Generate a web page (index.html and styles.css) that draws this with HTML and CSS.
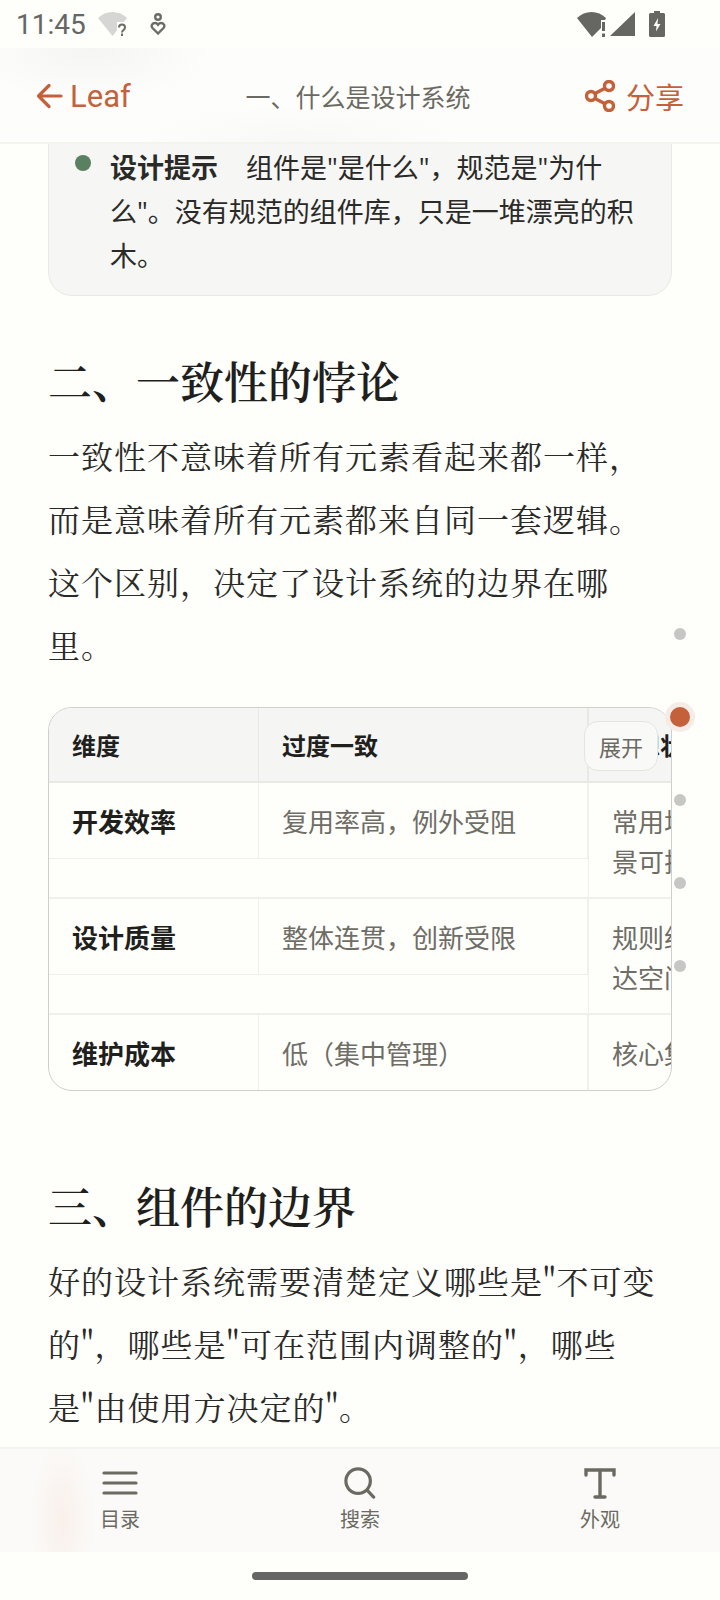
FILE: index.html
```html
<!DOCTYPE html>
<html lang="zh-CN">
<head>
    <meta charset="UTF-8">
    <meta name="viewport" content="width=device-width, initial-scale=1.0">
    <title>一、什么是设计系统</title>
    <link rel="stylesheet" href="styles.css">
</head>
<body>
    <div class="screen">
        <div class="status-bar">
            <div class="status-left">
                <span class="clock">11:45</span>
                <svg class="wifi-off" width="30" height="24" viewBox="0 0 30 24"><path d="M0 6C4 2 9 0 14.500 0S25 2 29 6L14.500 24z" fill="#d6d6d4"/><path d="M19 10h11v14H19z" fill="#fefefb"/><path d="M21 15.500c0-4 6-4 6 0 0 2.500-3 2.500-3 5" fill="none" stroke="#6b6b68" stroke-width="2"/><rect x="23" y="21.500" width="2" height="2.500" fill="#6b6b68"/></svg>
                <svg class="vpn" width="16" height="22" viewBox="0 0 16 22" fill="none" stroke="#6b6b68" stroke-width="2.400"><circle cx="8" cy="4" r="2.800"/><path d="M8 20.500L2.500 15C.5 12.500 2.500 10 5 10c1.300 0 2.300.7 3 1.700.7-1 1.700-1.700 3-1.700 2.500 0 4.500 2.500 2.500 5z"/></svg>
            </div>
            <div class="status-right">
                <svg class="wifi" width="29" height="25" viewBox="0 0 29 25"><path d="M0 6C4 2 9 0 14.500 0S25 2 29 6L28 8H24V16L15 25z" fill="#666663"/><rect x="25" y="10" width="3" height="9" fill="#666663"/><rect x="25" y="21.500" width="3" height="3.500" fill="#666663"/></svg>
                <svg class="signal" width="25" height="24" viewBox="0 0 25 24"><path d="M25 0v24H0z" fill="#666663"/></svg>
                <svg class="battery" width="16" height="26" viewBox="0 0 16 26"><path d="M5 0h6v2h3.500A1.500 1.500 0 0 1 16 3.500v21a1.500 1.500 0 0 1-1.500 1.500h-13A1.500 1.500 0 0 1 0 24.500v-21A1.500 1.500 0 0 1 1.500 2H5z" fill="#666663"/><path d="M9 7L4.500 15h3L7 20.500 11.500 13h-3z" fill="#fefefb"/></svg>
            </div>
        </div>

        <header class="top-bar">
            <a class="back">
                <svg width="28" height="28" viewBox="0 0 28 28" fill="none" stroke="currentColor" stroke-width="3.200" stroke-linecap="round" stroke-linejoin="round"><path d="M25 14H3M13 3.500L2.500 14 13 24.500"/></svg>
                <span>Leaf</span>
            </a>
            <div class="page-title">一、什么是设计系统</div>
            <a class="share">
                <svg width="30" height="32" viewBox="0 0 30 32" fill="none" stroke="currentColor" stroke-width="3.400"><circle cx="24" cy="6" r="4.500"/><circle cx="6" cy="16" r="4.500"/><circle cx="24" cy="26" r="4.500"/><path d="M10 13.500l10-5.200M10 18.500l10 5.200"/></svg>
                <span>分享</span>
            </a>
        </header>

        <main class="article">
            <div class="callout">
                <span class="callout-dot"></span>
                <p><strong>设计提示</strong>组件是"是什么"，规范是"为什么"。没有规范的组件库，只是一堆漂亮的积木。</p>
            </div>

            <h2>二、一致性的悖论</h2>
            <p class="para">一致性不意味着所有元素看起来都一样，而是意味着所有元素都来自同一套逻辑。这个区别，决定了设计系统的边界在哪里。</p>

            <div class="table-wrap">
                <div class="table">
                    <div class="row head">
                        <div class="cell">维度</div>
                        <div class="cell">过度一致</div>
                        <div class="cell last">理想状态</div>
                    </div>
                    <div class="row">
                        <div class="cell name">开发效率</div>
                        <div class="cell">复用率高，例外受阻</div>
                        <div class="cell last">常用场景一致，特殊场景可扩展</div>
                    </div>
                    <div class="row">
                        <div class="cell name">设计质量</div>
                        <div class="cell">整体连贯，创新受限</div>
                        <div class="cell last">规则约束明确清晰，表达空间充足</div>
                    </div>
                    <div class="row end">
                        <div class="cell name">维护成本</div>
                        <div class="cell">低（集中管理）</div>
                        <div class="cell last">核心集中，局部自治</div>
                    </div>
                </div>
                <button class="expand">展开</button>
            </div>

            <h2 class="second">三、组件的边界</h2>
            <p class="para">好的设计系统需要清楚定义哪些是"不可变的"，哪些是"可在范围内调整的"，哪些是"由使用方决定的"。</p>

            <div class="rail">
                <span class="rail-dot"></span>
                <span class="rail-dot on"></span>
                <span class="rail-dot"></span>
                <span class="rail-dot"></span>
                <span class="rail-dot"></span>
            </div>
        </main>

        <nav class="bottom-bar">
            <a class="tab">
                <svg width="36" height="32" viewBox="0 0 36 30" fill="none" stroke="currentColor" stroke-width="3.200" stroke-linecap="round"><path d="M2 5h32M2 15h32M2 25h32"/></svg>
                <span>目录</span>
            </a>
            <a class="tab">
                <svg width="36" height="32" viewBox="0 0 36 34" fill="none" stroke="currentColor" stroke-width="3.400" stroke-linecap="round"><circle cx="16" cy="15" r="13"/><path d="M25.500 24.500l7 7.500"/></svg>
                <span>搜索</span>
            </a>
            <a class="tab">
                <svg width="36" height="32" viewBox="0 0 36 32" fill="none" stroke="currentColor" stroke-width="3.400" stroke-linecap="round"><path d="M4 8V3h28v5M18 3v27M13 30h10"/></svg>
                <span>外观</span>
            </a>
        </nav>

        <div class="home-area"><span class="home-pill"></span></div>
    </div>
</body>
</html>
```

FILE: styles.css
```css
* {
    box-sizing: border-box;
}
html, body {
    margin: 0;
    padding: 0;
}
body {
    font-family: "Noto Sans CJK SC", Roboto, sans-serif;
    background: #fefefb;
    color: #1f1f1d;
}
.screen {
    width: 720px;
    height: 1600px;
    display: flex;
    flex-direction: column;
    overflow: hidden;
    background: #fefefb;
}

/* status bar */
.status-bar {
    height: 48px;
    padding: 0 55px 0 16px;
    display: flex;
    justify-content: space-between;
    align-items: center;
    color: #666663;
}
.status-left, .status-right {
    display: flex;
    align-items: center;
}
.clock {
    font-family: Roboto, sans-serif;
    font-size: 28px;
}
.wifi-off {
    margin-left: 12px;
}
.vpn {
    margin-left: 22px;
}
.signal {
    margin-left: 4px;
}
.battery {
    margin-left: 14px;
}

/* top bar */
.top-bar {
    height: 96px;
    padding: 2px 36px 0 36px;
    display: grid;
    grid-template-columns: 1fr auto 1fr;
    align-items: center;
    border-bottom: 2px solid #f3f3f0;
    background: radial-gradient(ellipse 120px 55px at 90px 0, #f5f5f3, rgba(253, 253, 251, 0) 100%), radial-gradient(ellipse 160px 40px at 300px 96px, #f8f8f6, rgba(253, 253, 251, 0) 100%), #fdfdfb;
}
.back, .share {
    display: flex;
    align-items: center;
    color: #c4603a;
    font-size: 29px;
}
.back {
    gap: 6px;
}
.back span {
    font-family: Roboto, sans-serif;
    font-size: 31px;
}
.share {
    gap: 11px;
    justify-self: end;
}
.page-title {
    font-size: 25px;
    color: #6b6a62;
    margin-right: 4px;
}

/* article */
.article {
    flex: 1;
    position: relative;
    padding: 0 48px;
    min-height: 0;
}
.callout {
    display: flex;
    gap: 19px;
    padding: 0 16px 17px 26px;
    background: #f6f6f4;
    border: 1px solid #e9e9e6;
    border-top: none;
    border-radius: 0 0 24px 24px;
}
.callout-dot {
    flex: none;
    width: 16px;
    height: 16px;
    margin-top: 11px;
    border-radius: 50%;
    background: #5a7f61;
}
.callout p {
    margin: 2px 0 0;
    font-family: "Open Sans", "Noto Sans CJK SC", sans-serif;
    font-size: 27px;
    line-height: 44px;
    color: #2a2a28;
}
.callout strong {
    margin-right: 28px;
    font-weight: 700;
}
h2 {
    margin: 52px 0 12px;
    font-family: "Noto Serif CJK SC", "Liberation Serif", serif;
    font-size: 44px;
    line-height: 64px;
    font-weight: 600;
    color: #1f1f1d;
}
h2.second {
    margin-top: 82px;
}
.para {
    margin: 0;
    font-family: "Noto Serif CJK SC", "Liberation Serif", serif;
    font-size: 32px;
    line-height: 63px;
    letter-spacing: 1px;
    color: #2a2a28;
}

/* table */
.table-wrap {
    position: relative;
    margin-top: 31px;
    border: 1px solid #cfcfcb;
    border-radius: 24px;
    overflow: hidden;
}
.table {
    width: 850px;
}
.row {
    display: grid;
    grid-template-columns: 210px 329px 311px;
    align-items: start;
    border-bottom: 2px solid #efefec;
    font-size: 26px;
    line-height: 40px;
    color: #6e6d66;
}
.row.end {
    border-bottom: none;
}
.row.head {
    background: #f5f5f3;
    font-size: 24px;
    font-weight: 700;
    color: #1f1f1d;
    border-bottom-color: #e8e8e5;
}
.cell {
    padding: 18px 23px 17px;
    border-right: 1px solid #efefec;
    border-bottom: 1px solid #efefec;
}
.row.head .cell, .row.end .cell {
    border-bottom: none;
}
.row.head .cell {
    padding: 17px 23px 16px;
    border-right-color: #e8e8e5;
}
.cell.name {
    font-weight: 700;
    color: #1f1f1d;
}
.cell.last {
    align-self: stretch;
    padding-bottom: 16px;
    padding-left: 23px;
    border-bottom: none;
    border-left: 1px solid #efefec;
}
.row.head .cell.last {
    border-left-color: #e8e8e5;
}
.expand {
    position: absolute;
    top: 13px;
    right: 13px;
    width: 74px;
    height: 50px;
    padding: 0;
    font-family: inherit;
    font-size: 22px;
    color: #6b6a62;
    background: #f9f9f7;
    border: 1px solid #e4e4e1;
    border-radius: 14px;
}

/* progress rail */
.rail {
    position: absolute;
    right: 34px;
    top: 484px;
    display: flex;
    flex-direction: column;
    align-items: center;
    gap: 71px;
    width: 12px;
}
.rail-dot {
    flex: none;
    width: 12px;
    height: 12px;
    border-radius: 50%;
    background: #c6c6c4;
}
.rail-dot.on {
    width: 20px;
    height: 20px;
    margin: -4px 0;
    background: #c4603a;
    box-shadow: 0 0 0 5px #f6ece7;
}

/* bottom bar */
.bottom-bar {
    height: 105px;
    display: grid;
    grid-template-columns: repeat(3, 240px);
    border-top: 2px solid #f3f3f0;
    background: radial-gradient(ellipse 32px 80px at 62px 70px, #f9f0eb, rgba(251, 250, 248, 0) 100%), #fbfaf8;
}
.tab {
    display: flex;
    flex-direction: column;
    align-items: center;
    gap: 6px;
    padding-top: 18px;
    color: #6b6a62;
    font-size: 20px;
}
.tab span {
    line-height: 28px;
}
.home-area {
    height: 48px;
    display: flex;
    justify-content: center;
    padding-top: 20px;
}
.home-pill {
    width: 216px;
    height: 8px;
    border-radius: 4px;
    background: #666664;
}
```
